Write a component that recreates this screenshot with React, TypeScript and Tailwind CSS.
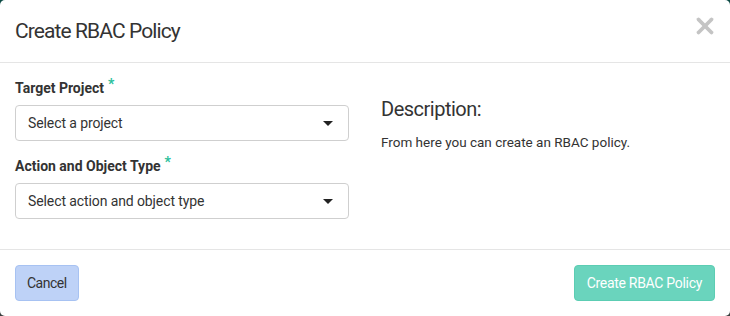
import { X } from "lucide-react"

function Field({ label, placeholder }: { label: string; placeholder: string }) {
  return (
    <div>
      <label className="flex items-start text-[14px] font-bold text-[#333] leading-[20px]">
        {label}
        <span className="ml-[4px] text-[#2bbf9c] text-[14px] leading-[12px]">*</span>
      </label>
      <div className="mt-[7px] h-[36px] w-[334px] rounded-[4px] border border-[#cfcfcf] bg-white flex items-center justify-between pl-[12px] pr-[15px]">
        <span className="text-[14px] text-[#333] tracking-[-0.1px]">{placeholder}</span>
        <span className="w-0 h-0 border-l-[5px] border-r-[5px] border-t-[5px] border-l-transparent border-r-transparent border-t-[#222]" />
      </div>
    </div>
  )
}

export default function App() {
  return (
    <div className="w-[730px] h-[316px] bg-gradient-to-b from-[#0c4a44] to-[#3a3f3f]" style={{ fontFamily: "Roboto, 'Liberation Sans', sans-serif" }}>
      <div className="w-full h-full bg-white rounded-[5px] flex flex-col overflow-hidden">
        <div className="h-[63px] border-b border-[#e5e5e5] flex items-center justify-between px-[15px] shrink-0">
          <h1 className="text-[21px] text-[#333] tracking-[-0.9px] pt-[1px]">Create RBAC Policy</h1>
          <X size={26} strokeWidth={3.5} className="text-[#c4c4c4] -mr-[3px] mb-[10px]" />
        </div>
        <div className="flex-1 flex px-[15px] pt-[15px] border-b border-[#e5e5e5]">
          <div className="w-[334px] flex flex-col gap-[15px]">
            <Field label="Target Project" placeholder="Select a project" />
            <Field label="Action and Object Type" placeholder="Select action and object type" />
          </div>
          <div className="ml-[32px] pt-[18px]">
            <h2 className="text-[20px] text-[#333] tracking-[-0.5px] leading-[26px]">Description:</h2>
            <p className="mt-[10px] text-[13.5px] text-[#333]">From here you can create an RBAC policy.</p>
          </div>
        </div>
        <div className="h-[66px] shrink-0 flex items-center justify-between px-[15px]">
          <button className="h-[36px] px-[11px] rounded-[4px] bg-[#bed2f7] border border-[#a7c2f2] text-[14px] text-[#333] tracking-[-0.5px]">
            Cancel
          </button>
          <button className="h-[36px] px-[12px] rounded-[4px] bg-[#6ad4bd] border border-[#5ccdb3] text-[14px] text-white tracking-[-0.3px]">
            Create RBAC Policy
          </button>
        </div>
      </div>
    </div>
  )
}
